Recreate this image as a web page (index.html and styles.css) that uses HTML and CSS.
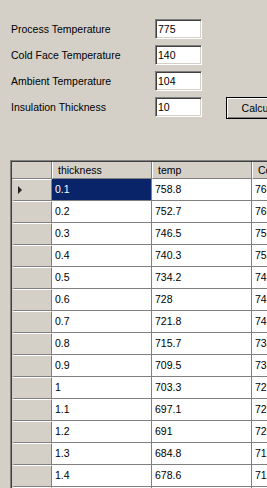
FILE: index.html
```html
<!DOCTYPE html>
<html>
<head>
<meta charset="utf-8">
<link rel="stylesheet" href="styles.css">
</head>
<body>
<div class="form">
  <div class="field"><span class="label">Process Temperature</span><div class="textbox">775</div></div>
  <div class="field"><span class="label">Cold Face Temperature</span><div class="textbox">140</div></div>
  <div class="field"><span class="label">Ambient Temperature</span><div class="textbox">104</div></div>
  <div class="field"><span class="label">Insulation Thickness</span><div class="textbox">10</div><div class="button">Calculate</div></div>
</div>
<div class="grid">
  <div class="grid-inner">
    <table class="table">
      <colgroup><col class="c-rh"><col class="c-1"><col class="c-2"><col class="c-3"></colgroup>
      <thead>
        <tr><th class="corner"></th><th class="hd">thickness</th><th class="hd">temp</th><th class="hd">Cold Face</th></tr>
      </thead>
      <tbody>
        <tr><td class="rh"><span class="arrow"></span></td><td class="sel">0.1</td><td>758.8</td><td>765.0</td></tr>
        <tr><td class="rh"></td><td>0.2</td><td>752.7</td><td>761.3</td></tr>
        <tr><td class="rh"></td><td>0.3</td><td>746.5</td><td>757.5</td></tr>
        <tr><td class="rh"></td><td>0.4</td><td>740.3</td><td>753.8</td></tr>
        <tr><td class="rh"></td><td>0.5</td><td>734.2</td><td>749.9</td></tr>
        <tr><td class="rh"></td><td>0.6</td><td>728</td><td>746.1</td></tr>
        <tr><td class="rh"></td><td>0.7</td><td>721.8</td><td>742.3</td></tr>
        <tr><td class="rh"></td><td>0.8</td><td>715.7</td><td>738.4</td></tr>
        <tr><td class="rh"></td><td>0.9</td><td>709.5</td><td>734.6</td></tr>
        <tr><td class="rh"></td><td>1</td><td>703.3</td><td>726.8</td></tr>
        <tr><td class="rh"></td><td>1.1</td><td>697.1</td><td>722.9</td></tr>
        <tr><td class="rh"></td><td>1.2</td><td>691</td><td>720.1</td></tr>
        <tr><td class="rh"></td><td>1.3</td><td>684.8</td><td>716.2</td></tr>
        <tr><td class="rh"></td><td>1.4</td><td>678.6</td><td>712.4</td></tr>
        <tr><td class="rh"></td><td>1.5</td><td>672.4</td><td>708.5</td></tr>
      </tbody>
    </table>
  </div>
</div>
</body>
</html>
```
FILE: styles.css
```css
html, body {
  margin: 0;
  padding: 0;
  width: 267px;
  height: 488px;
  overflow: hidden;
  background: #d4d0c8;
  font-family: "Liberation Sans", Arial, sans-serif;
  font-size: 10.5px;
  color: #000;
}

.form {
  padding-top: 19px;
  display: flex;
  flex-direction: column;
  gap: 6px;
}

.field {
  display: flex;
  align-items: center;
  height: 20px;
  white-space: nowrap;
}

.label {
  width: 144px;
  padding-left: 11px;
  flex: none;
}

.textbox {
  flex: none;
  box-sizing: border-box;
  width: 47px;
  height: 20px;
  background: #fff;
  border: 1px solid;
  border-color: #808080 #fff #fff #808080;
  box-shadow: inset 1px 1px 0 #404040, inset -1px -1px 0 #d4d0c8;
  padding: 2px 0 0 2px;
  line-height: 15px;
}

.button {
  flex: none;
  box-sizing: border-box;
  margin-left: 24px;
  margin-top: 1px;
  width: 75px;
  height: 22px;
  border: 1px solid #000;
  box-shadow: inset 1px 1px 0 #fff, inset -1px -1px 0 #808080;
  text-align: center;
  line-height: 20px;
}

.grid {
  margin: 43px 0 0 10px;
  border-top: 1px solid #808080;
  border-left: 1px solid #808080;
}

.grid-inner {
  border-top: 1px solid #404040;
  border-left: 1px solid #404040;
  background: #808080;
}

.table {
  border-collapse: separate;
  border-spacing: 0;
  table-layout: fixed;
  width: 340px;
}

.c-rh { width: 40px; }
.c-1 { width: 100px; }
.c-2 { width: 100px; }
.c-3 { width: 100px; }

th, td {
  padding: 0;
  font-weight: normal;
  text-align: left;
  white-space: nowrap;
  overflow: hidden;
}

th {
  height: 16px;
  background: #d4d0c8;
  border-bottom: 1px solid #808080;
  line-height: 15px;
}

.corner {
  border-right: 1px solid #808080;
}

.hd {
  box-sizing: border-box;
  padding-left: 5px;
  border-left: 1px solid #fff;
  border-right: 1px solid #808080;
}

td {
  height: 21px;
  background: #fff;
  border-right: 1px solid #808080;
  border-bottom: 1px solid #808080;
  padding-left: 3px;
  line-height: 21px;
}

td.rh {
  box-sizing: border-box;
  padding: 0;
  background: #d4d0c8;
  border-top: 1px solid #fff;
  border-left: 2px solid #d4d0c8;
  position: relative;
}

.arrow {
  position: absolute;
  left: 4px;
  top: 6px;
  width: 0;
  height: 0;
  border-left: 4px solid #222;
  border-top: 4px solid transparent;
  border-bottom: 4px solid transparent;
}

td.sel {
  background: #0a246a;
  color: #fff;
}
```
